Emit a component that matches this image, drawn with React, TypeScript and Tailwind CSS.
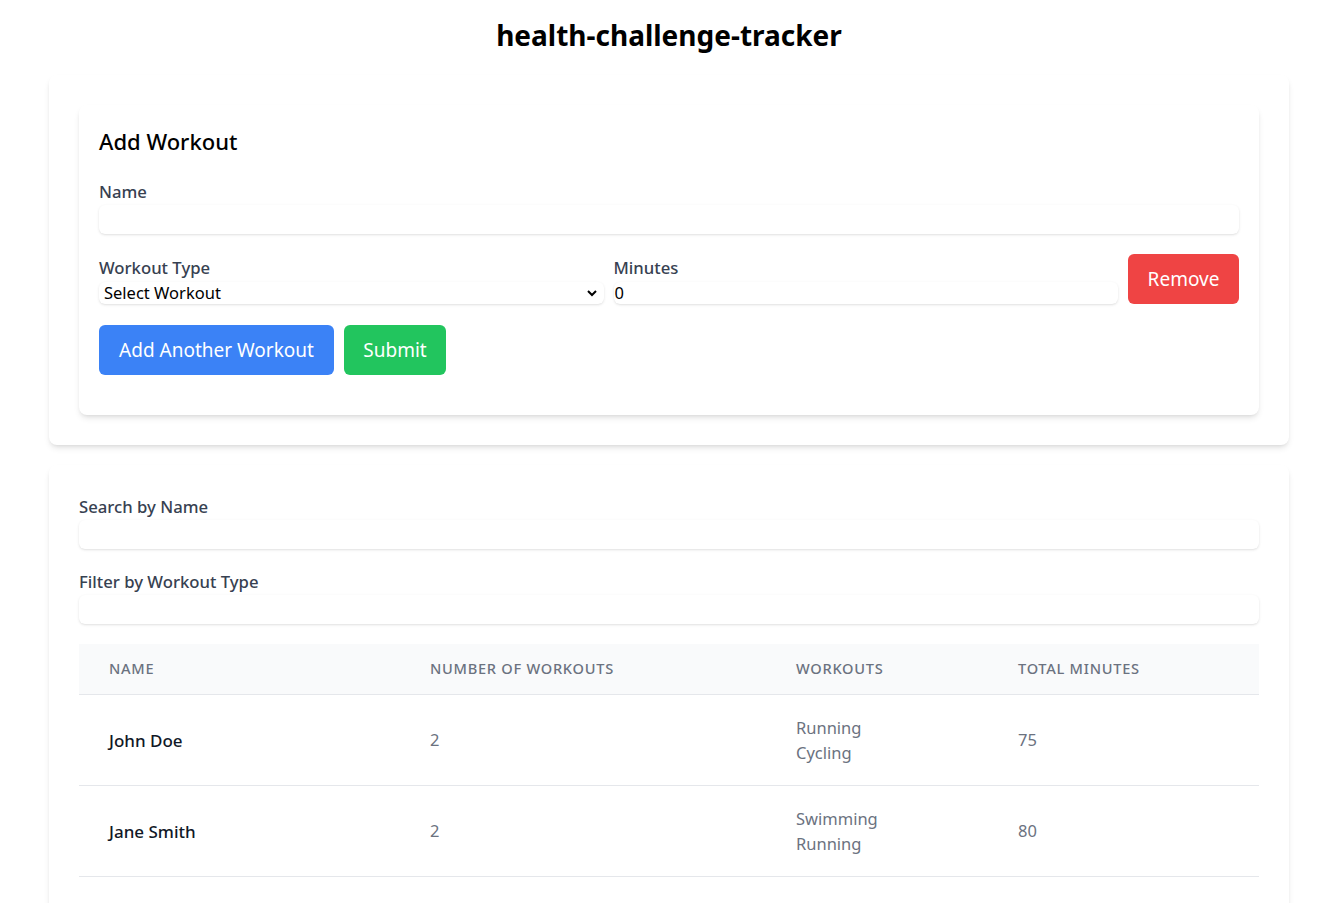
import React from "react";

const rows = [
  { name: "John Doe", count: 2, workouts: ["Running", "Cycling"], total: 75 },
  { name: "Jane Smith", count: 2, workouts: ["Swimming", "Running"], total: 80 },
];

export default function App() {
  return (
    <div className="min-h-screen bg-white pl-[14px] text-black" style={{ fontFamily: '"Noto Sans", "Open Sans", sans-serif' }}>
      <h1 className="pt-[14px] text-center text-[28px] font-bold leading-[42px]">health-challenge-tracker</h1>
      <div className="mx-auto mt-[19px] w-[1240px]">
        <div className="rounded-lg bg-white p-[30px] shadow-md">
          <div className="rounded-lg bg-white p-5 pb-10 shadow-md">
            <h2 className="mb-[23px] text-[22px] font-medium leading-[32px]">Add Workout</h2>
            <div className="mb-5">
              <label className="block text-[16.7px] font-medium leading-6 text-[#374151]">Name</label>
              <input className="mt-[1px] block h-[29px] w-full rounded-md bg-white shadow-sm outline-none" />
            </div>
            <div className="mb-[21px] flex items-end gap-[10px]">
              <div className="flex-1">
                <label className="block text-[16.7px] font-medium leading-6 text-[#374151]">Workout Type</label>
                <div className="mt-[2px] flex h-[22px] items-center justify-between rounded-md bg-white pl-[5px] pr-[6px] shadow-sm">
                  <span className="text-[16.5px] leading-5 text-black">Select Workout</span>
                  <svg width="12" height="12" viewBox="0 0 12 12" fill="none" stroke="black" strokeWidth="2">
                    <path d="M2 4l4 4 4-4" />
                  </svg>
                </div>
              </div>
              <div className="flex-1">
                <label className="block text-[16.7px] font-medium leading-6 text-[#374151]">Minutes</label>
                <div className="mt-[2px] flex h-[22px] items-center rounded-md bg-white pl-[1px] shadow-sm">
                  <span className="text-[16.5px] leading-5 text-black">0</span>
                </div>
              </div>
              <button className="h-[50px] w-[111px] rounded-md bg-[#ef4444] text-[19px] text-white">Remove</button>
            </div>
            <div className="flex gap-[10px]">
              <button className="h-[50px] w-[235px] rounded-md bg-[#3b82f6] text-[19px] text-white">Add Another Workout</button>
              <button className="h-[50px] w-[102px] rounded-md bg-[#22c55e] text-[19px] text-white">Submit</button>
            </div>
          </div>
        </div>

        <div className="mt-[20px] rounded-lg bg-white p-[30px] shadow-md">
          <div className="mb-[21px]">
            <label className="block text-[16.7px] font-medium leading-6 text-[#374151]">Search by Name</label>
            <input className="mt-[1px] block h-[29px] w-full rounded-md bg-white shadow-sm outline-none" />
          </div>
          <div className="mb-[20px]">
            <label className="block text-[16.7px] font-medium leading-6 text-[#374151]">Filter by Workout Type</label>
            <input className="mt-[1px] block h-[29px] w-full rounded-md bg-white shadow-sm outline-none" />
          </div>
          <table className="w-full border-collapse">
            <thead className="bg-[#f9fafb]">
              <tr className="h-[50px] border-b border-[#e5e7eb]">
                <th className="w-[321px] px-[30px] text-left text-[14.6px] font-medium uppercase tracking-wider text-[#6b7280]">Name</th>
                <th className="w-[366px] px-[30px] text-left text-[14.6px] font-medium uppercase tracking-wider text-[#6b7280]">Number of Workouts</th>
                <th className="w-[222px] px-[30px] text-left text-[14.6px] font-medium uppercase tracking-wider text-[#6b7280]">Workouts</th>
                <th className="px-[30px] text-left text-[14.6px] font-medium uppercase tracking-wider text-[#6b7280]">Total Minutes</th>
              </tr>
            </thead>
            <tbody>
              {rows.map((r) => (
                <tr key={r.name} className="border-b border-[#e5e7eb]">
                  <td className="px-[30px] pb-[19px] pt-[21px] text-[17px] font-medium text-[#111827]">{r.name}</td>
                  <td className="px-[30px] pb-[19px] pt-[21px] text-[16.5px] text-[#6b7280]">{r.count}</td>
                  <td className="px-[30px] py-5 text-[16.5px] leading-[25px] text-[#6b7280]">
                    {r.workouts.map((w) => (
                      <div key={w}>{w}</div>
                    ))}
                  </td>
                  <td className="px-[30px] pb-[19px] pt-[21px] text-[16.5px] text-[#6b7280]">{r.total}</td>
                </tr>
              ))}
            </tbody>
          </table>
          <div className="h-[40px]" />
        </div>
      </div>
    </div>
  );
}
